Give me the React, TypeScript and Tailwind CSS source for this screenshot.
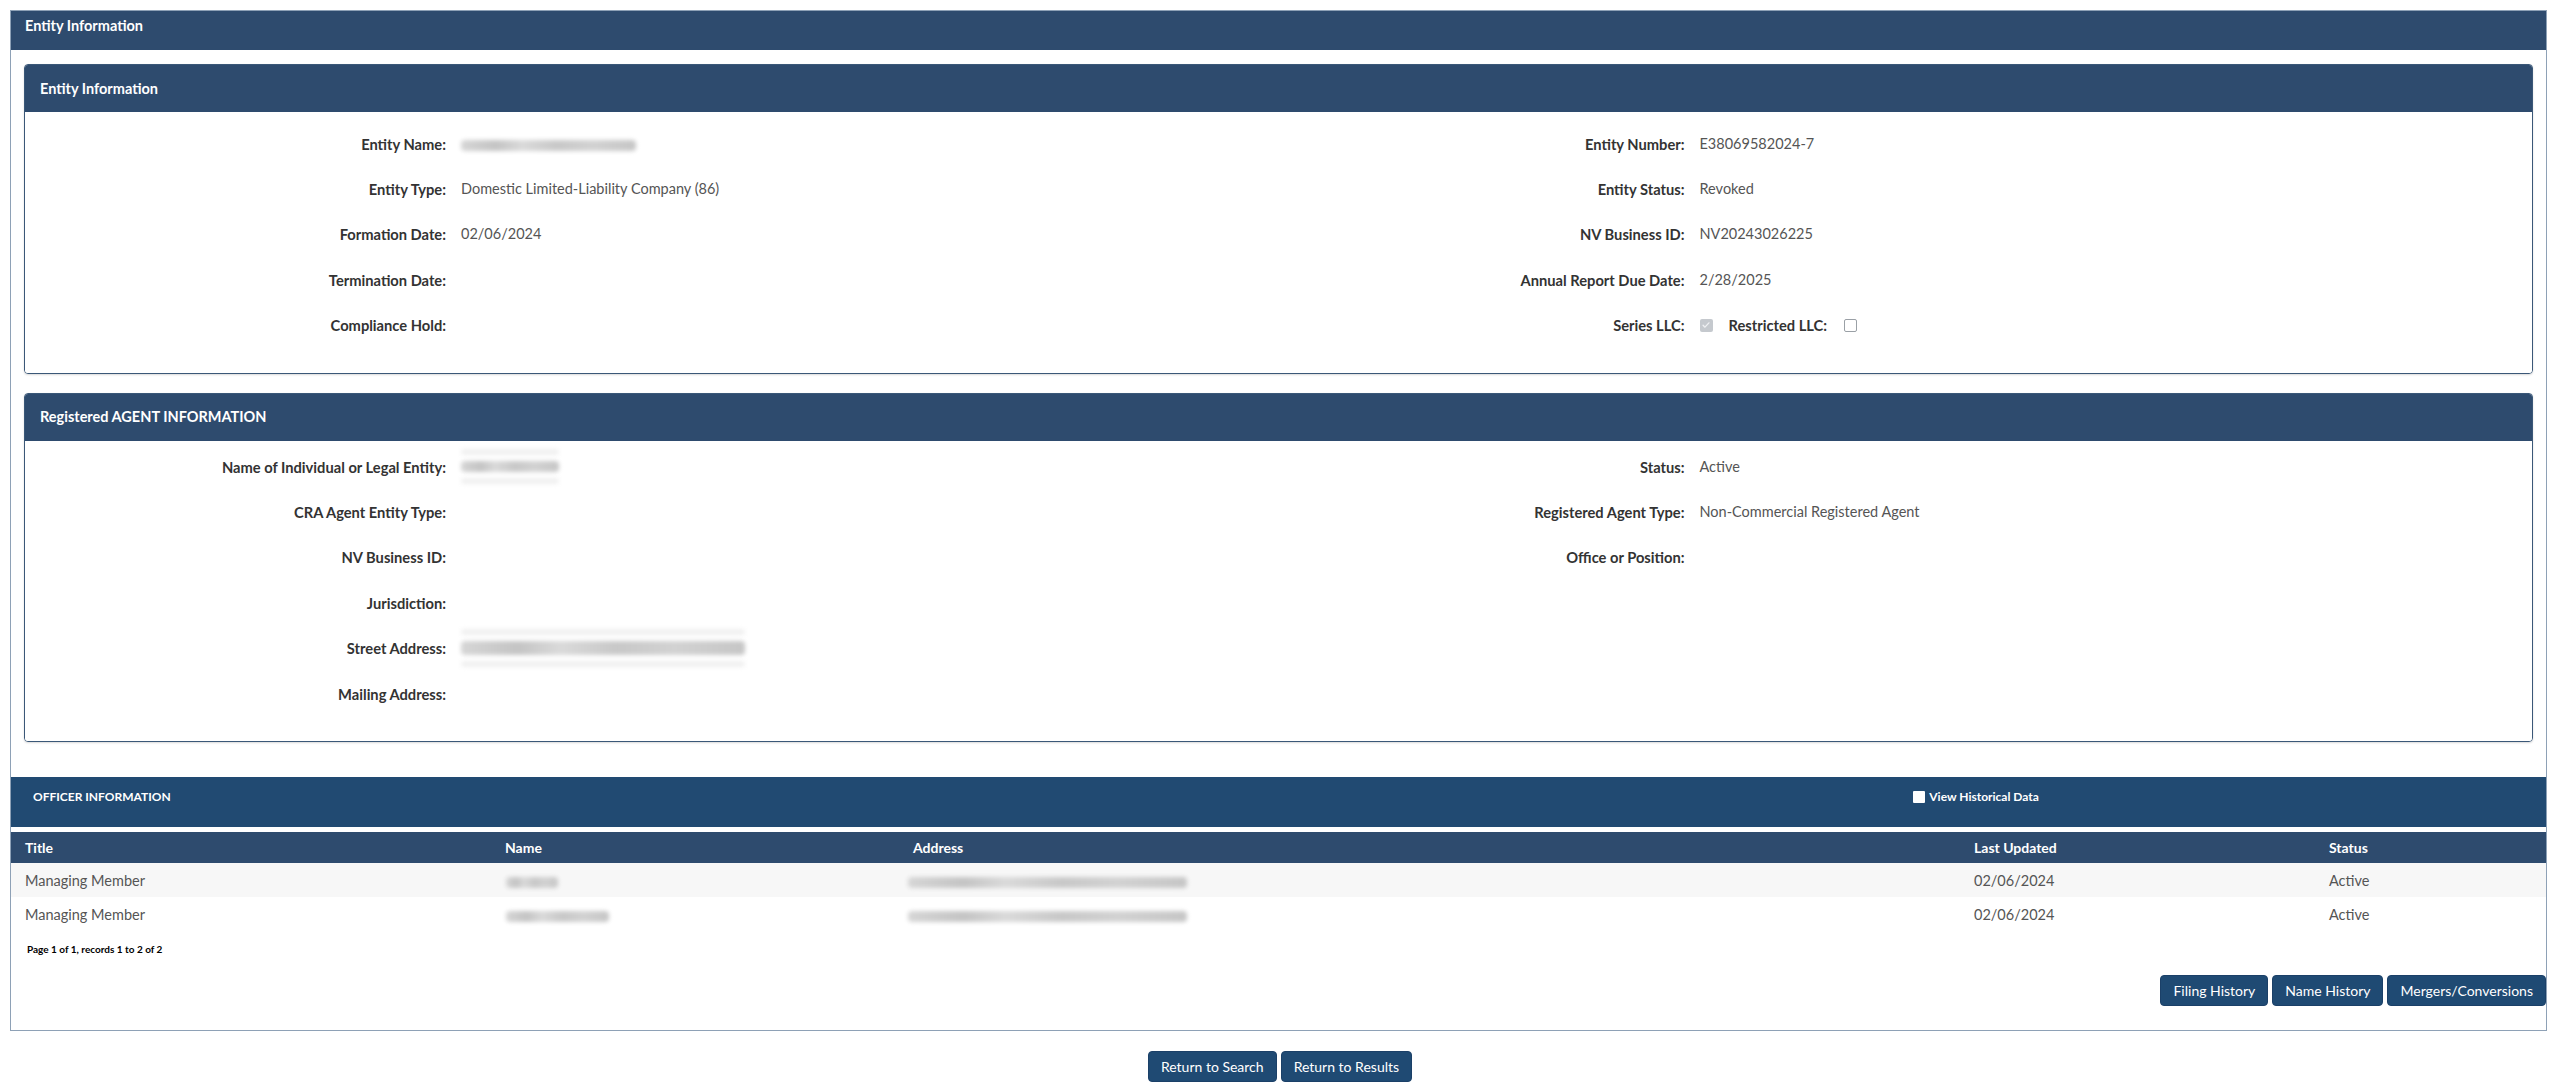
import type { ReactNode } from "react";

type Field = { label: string; value?: ReactNode };

// Blurred placeholder for values that are hidden from the public view.
function Redacted({ width, tall = false, ghost = false }: { width: number; tall?: boolean; ghost?: boolean }) {
  return (
    <span className="relative inline-flex flex-col justify-center align-middle" style={{ width }}>
      {ghost ? <span className="mb-[6px] block h-[6px] w-full rounded bg-[#f0f0f0] blur-[2px]" /> : null}
      <span
        className={`block w-full rounded bg-[linear-gradient(90deg,#d6d6d6_0%,#c4c4c4_20%,#dadada_35%,#c8c8c8_55%,#d2d2d2_75%,#c6c6c6_100%)] blur-[2px] ${
          tall ? "h-[14px]" : "h-[11px]"
        }`}
      />
      {ghost ? <span className="mt-[6px] block h-[6px] w-full rounded bg-[#f0f0f0] blur-[2px]" /> : null}
    </span>
  );
}

function Checkbox({ checked }: { checked: boolean }) {
  if (checked) {
    return (
      <span className="inline-flex size-[13px] items-center justify-center rounded-[2px] bg-[#c5c9ce]">
        <svg viewBox="0 0 12 12" className="size-[10px]" fill="none" stroke="#eef0f2" strokeWidth="1.6" strokeLinecap="round" strokeLinejoin="round">
          <path d="M2.5 6.3l2.2 2.3 4.8-5.2" />
        </svg>
      </span>
    );
  }
  return <span className="inline-block size-[13px] rounded-[2px] border border-[#9aa0a6] bg-white" />;
}

function FieldRow({ field, labelWidth }: { field: Field; labelWidth: number }) {
  return (
    <div className="flex h-[45.4px] items-center">
      <div className="shrink-0 text-right text-[14.7px] font-bold text-[#333]" style={{ width: labelWidth }}>
        {field.label}
      </div>
      <div className="ml-[15px] text-[#555]">{field.value}</div>
    </div>
  );
}

function InfoPanel({
  title,
  left,
  right,
  bodyTop,
}: {
  title: string;
  left: Field[];
  right: ReactNode;
  bodyTop: string;
}) {
  return (
    <section className="overflow-hidden rounded-[4px] border border-[#3b5878] shadow-[0_1px_2px_rgba(0,0,0,0.15)]">
      <div className="flex h-[47px] items-center bg-[#2e4b6e] px-[15px] text-[14.5px] font-bold text-white">{title}</div>
      <div className={`grid grid-cols-2 bg-white pb-[25px] ${bodyTop}`}>
        <div>
          {left.map((f) => (
            <FieldRow key={f.label} field={f} labelWidth={421} />
          ))}
        </div>
        <div>{right}</div>
      </div>
    </section>
  );
}

const entityLeft: Field[] = [
  { label: "Entity Name:", value: <Redacted width={175} /> },
  { label: "Entity Type:", value: "Domestic Limited-Liability Company (86)" },
  { label: "Formation Date:", value: "02/06/2024" },
  { label: "Termination Date:" },
  { label: "Compliance Hold:" },
];

const entityRight: Field[] = [
  { label: "Entity Number:", value: "E38069582024-7" },
  { label: "Entity Status:", value: "Revoked" },
  { label: "NV Business ID:", value: "NV20243026225" },
  { label: "Annual Report Due Date:", value: "2/28/2025" },
];

const agentLeft: Field[] = [
  { label: "Name of Individual or Legal Entity:", value: <Redacted width={98} ghost /> },
  { label: "CRA Agent Entity Type:" },
  { label: "NV Business ID:" },
  { label: "Jurisdiction:" },
  { label: "Street Address:", value: <Redacted width={284} tall ghost /> },
  { label: "Mailing Address:" },
];

const agentRight: Field[] = [
  { label: "Status:", value: "Active" },
  { label: "Registered Agent Type:", value: "Non-Commercial Registered Agent" },
  { label: "Office or Position:" },
];

const officers = [
  { title: "Managing Member", name: 52, updated: "02/06/2024", status: "Active" },
  { title: "Managing Member", name: 103, updated: "02/06/2024", status: "Active" },
];

function NavButton({ children }: { children: ReactNode }) {
  return (
    <button
      type="button"
      className="h-[31px] rounded-[4px] border border-[#1b4068] bg-[#1f4a73] px-[12px] text-[14px] text-white"
    >
      {children}
    </button>
  );
}

export default function App() {
  return (
    <div className="min-h-screen bg-white pt-[10px] font-['Lato','Liberation_Sans',sans-serif] text-[14.5px] leading-[20px] text-[#333]">
      <div className="ml-[10px] mr-[13px] border border-[#8ea1b6]">
        <div className="h-[39px] bg-[#2e4b6e] px-[14px] pt-[5px] text-[14.5px] font-bold text-white">Entity Information</div>

        <div className="px-[13px] pt-[14px]">
          <InfoPanel
            title="Entity Information"
            left={entityLeft}
            bodyTop="pt-[9px]"
            right={
              <>
                {entityRight.map((f) => (
                  <FieldRow key={f.label} field={f} labelWidth={406} />
                ))}
                <div className="flex h-[45.4px] items-center">
                  <div className="w-[406px] shrink-0 text-right text-[14.7px] font-bold">Series LLC:</div>
                  <div className="ml-[15px] flex items-center">
                    <Checkbox checked />
                    <span className="ml-[16px] text-[14.7px] font-bold">Restricted LLC:</span>
                    <span className="ml-[17px] mt-[3px]">
                      <Checkbox checked={false} />
                    </span>
                  </div>
                </div>
              </>
            }
          />

          <div className="mt-[19px]">
            <InfoPanel
              title="Registered AGENT INFORMATION"
              left={agentLeft}
              bodyTop="pt-[3px]"
              right={agentRight.map((f) => (
                <FieldRow key={f.label} field={f} labelWidth={406} />
              ))}
            />
          </div>
        </div>

        {/* Officer table */}
        <div className="mt-[35px] flex h-[50px] bg-[#214a72] text-white">
          <div className="w-3/4 pl-[22px] pt-[10px] text-[12px] font-bold">OFFICER INFORMATION</div>
          <div className="flex w-1/4 items-start pl-[1px] pt-[10px] text-[12px] font-bold">
            <span className="mr-[4px] mt-[4px] inline-block size-[12px] rounded-[1px] bg-white" />
            View Historical Data
          </div>
        </div>

        <div className="mt-[5px] grid h-[31px] grid-cols-[480px_408px_1061px_355px_1fr] items-center bg-[#2e4b6e] text-[14px] font-bold text-white">
          <div className="pl-[14px]">Title</div>
          <div className="pl-[14px]">Name</div>
          <div className="pl-[14px]">Address</div>
          <div className="pl-[14px]">Last Updated</div>
          <div className="pl-[14px]">Status</div>
        </div>
        {officers.map((o, i) => (
          <div
            key={i}
            className={`grid h-[34px] grid-cols-[480px_408px_1061px_355px_1fr] items-center pt-[2px] text-[#555] ${
              i % 2 === 0 ? "bg-[#f7f7f7]" : "bg-white"
            }`}
          >
            <div className="pl-[14px]">{o.title}</div>
            <div className="pl-[15px]">
              <Redacted width={o.name} />
            </div>
            <div className="pl-[9px]">
              <Redacted width={279} />
            </div>
            <div className="pl-[14px]">{o.updated}</div>
            <div className="pl-[14px]">{o.status}</div>
          </div>
        ))}

        <div className="pl-[16px] pt-[11px] text-[10px] font-bold leading-[14px] text-black">
          Page 1 of 1, records 1 to 2 of 2
        </div>

        <div className="flex justify-end gap-[4px] pb-[24px] pt-[19px]">
          <NavButton>Filing History</NavButton>
          <NavButton>Name History</NavButton>
          <NavButton>Mergers/Conversions</NavButton>
        </div>
      </div>

      <div className="mt-[20px] flex justify-center gap-[4px]">
        <NavButton>Return to Search</NavButton>
        <NavButton>Return to Results</NavButton>
      </div>
    </div>
  );
}
